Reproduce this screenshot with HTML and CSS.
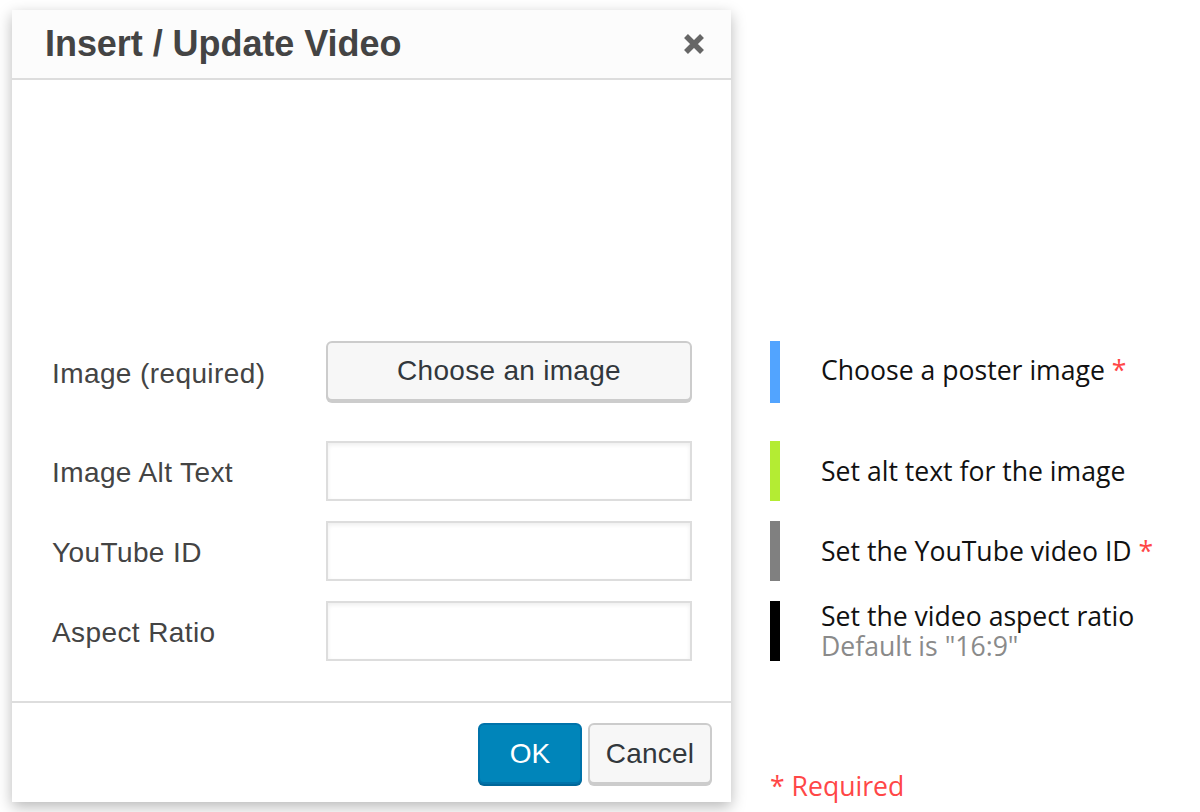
FILE: index.html
```html
<!DOCTYPE html>
<html lang="en">
<head>
<meta charset="utf-8">
<title>Insert / Update Video</title>
<link rel="stylesheet" href="styles.css">
</head>
<body>
<div class="page">
  <div class="dialog">
    <div class="dialog-head">
      <h1 class="dialog-title">Insert / Update Video</h1>
      <button class="close" aria-label="Close">
        <svg width="22" height="22" viewBox="0 0 22 22"><path d="M3 3 L19 19 M19 3 L3 19" stroke="#666" stroke-width="5.5" stroke-linecap="butt" fill="none"/></svg>
      </button>
    </div>
    <div class="dialog-body">
      <div class="row row-first">
        <label class="label">Image (required)</label>
        <button class="btn btn-default btn-wide">Choose an image</button>
      </div>
      <div class="row">
        <label class="label">Image Alt Text</label>
        <input class="input" type="text">
      </div>
      <div class="row">
        <label class="label">YouTube ID</label>
        <input class="input" type="text">
      </div>
      <div class="row">
        <label class="label">Aspect Ratio</label>
        <input class="input" type="text">
      </div>
    </div>
    <div class="dialog-foot">
      <button class="btn btn-primary">OK</button>
      <button class="btn btn-default btn-cancel">Cancel</button>
    </div>
  </div>
  <div class="notes">
    <div class="note note-first">
      <span class="bar bar-blue"></span>
      <div class="note-text">Choose a poster image <span class="req">*</span></div>
    </div>
    <div class="note">
      <span class="bar bar-green"></span>
      <div class="note-text">Set alt text for the image</div>
    </div>
    <div class="note">
      <span class="bar bar-gray"></span>
      <div class="note-text">Set the YouTube video ID <span class="req">*</span></div>
    </div>
    <div class="note note-top">
      <span class="bar bar-black"></span>
      <div class="note-text">Set the video aspect ratio<span class="note-sub">Default is "16:9"</span></div>
    </div>
    <div class="legend">* Required</div>
  </div>
</div>
</body>
</html>
```
FILE: styles.css
```css
html, body {
  margin: 0;
  padding: 0;
  background: #fff;
}
body {
  width: 1200px;
  height: 812px;
  overflow: hidden;
}
.page {
  display: flex;
  align-items: flex-start;
  padding: 10px 0 0 12px;
}
.dialog {
  width: 719px;
  height: 792px;
  background: #fff;
  box-shadow: 0 5px 14px rgba(0, 0, 0, 0.28);
  display: flex;
  flex-direction: column;
  font-family: "Liberation Sans", Arial, sans-serif;
}
.dialog-head {
  height: 68px;
  background: #fcfcfc;
  border-bottom: 2px solid #dddddd;
  display: flex;
  align-items: center;
  justify-content: space-between;
  padding: 0 26px 0 33px;
}
.dialog-title {
  margin: 0;
  font-size: 36px;
  font-weight: 700;
  color: #444444;
  line-height: 1;
  letter-spacing: -0.05px;
}
.close {
  border: 0;
  background: none;
  padding: 0;
  width: 22px;
  height: 22px;
  display: flex;
}
.dialog-body {
  flex: 1;
  padding: 261px 39px 0 40px;
  display: flex;
  flex-direction: column;
  gap: 20px;
}
.row {
  display: flex;
  align-items: center;
}
.row-first {
  margin-bottom: 18px;
}
.label {
  width: 274px;
  font-size: 28px;
  color: #444444;
  letter-spacing: 0.4px;
  padding-top: 3px;
}
.input {
  width: 366px;
  height: 60px;
  box-sizing: border-box;
  border: 2px solid #dddddd;
  box-shadow: inset 0 2px 4px rgba(0, 0, 0, 0.07);
  background: #fff;
  margin: 0;
  padding: 0 10px;
}
.btn {
  box-sizing: border-box;
  height: 61px;
  border-radius: 6px;
  font-family: "Liberation Sans", Arial, sans-serif;
  font-size: 28px;
  margin: 0;
  padding: 0;
  cursor: pointer;
}
.btn-default {
  background: #f7f7f7;
  border: 2px solid #cccccc;
  box-shadow: 0 2px 0 #cccccc;
  color: #32373c;
}
.btn-wide {
  width: 366px;
  height: 60px;
  margin-bottom: 2px;
  letter-spacing: 0.3px;
}
.dialog-foot {
  height: 101px;
  border-top: 2px solid #dddddd;
  display: flex;
  justify-content: flex-end;
  align-items: flex-start;
  gap: 6px;
  padding: 20px 19px 0 0;
  box-sizing: border-box;
}
.btn-primary {
  width: 104px;
  background: #0085ba;
  border: 2px solid #0073aa;
  box-shadow: 0 2px 0 #006799;
  color: #ffffff;
}
.btn-cancel {
  width: 124px;
  letter-spacing: 0.2px;
}
.notes {
  margin-left: 39px;
  padding-top: 331px;
  display: flex;
  flex-direction: column;
  gap: 20px;
  font-family: "Open Sans", "Noto Sans", sans-serif;
  font-size: 26.6px;
  color: #111111;
}
.note {
  display: flex;
  align-items: center;
  height: 60px;
}
.note-first {
  height: 62px;
  margin-bottom: 18px;
}
.note-first .note-text {
  padding-bottom: 5px;
}
.note-top {
  align-items: flex-start;
}
.bar {
  width: 10px;
  align-self: stretch;
  flex: none;
  margin-right: 41px;
}
.bar-blue { background: #52a4ff; }
.bar-green { background: #b4ec33; }
.bar-gray { background: #808080; }
.bar-black { background: #000000; }
.note-text {
  line-height: 30px;
  white-space: nowrap;
}
.note-sub {
  display: block;
  color: #8a8a8a;
  line-height: 30px;
}
.req {
  color: #ff4747;
}
.legend {
  margin-top: 90px;
  color: #ff4747;
  line-height: 30px;
}
```
